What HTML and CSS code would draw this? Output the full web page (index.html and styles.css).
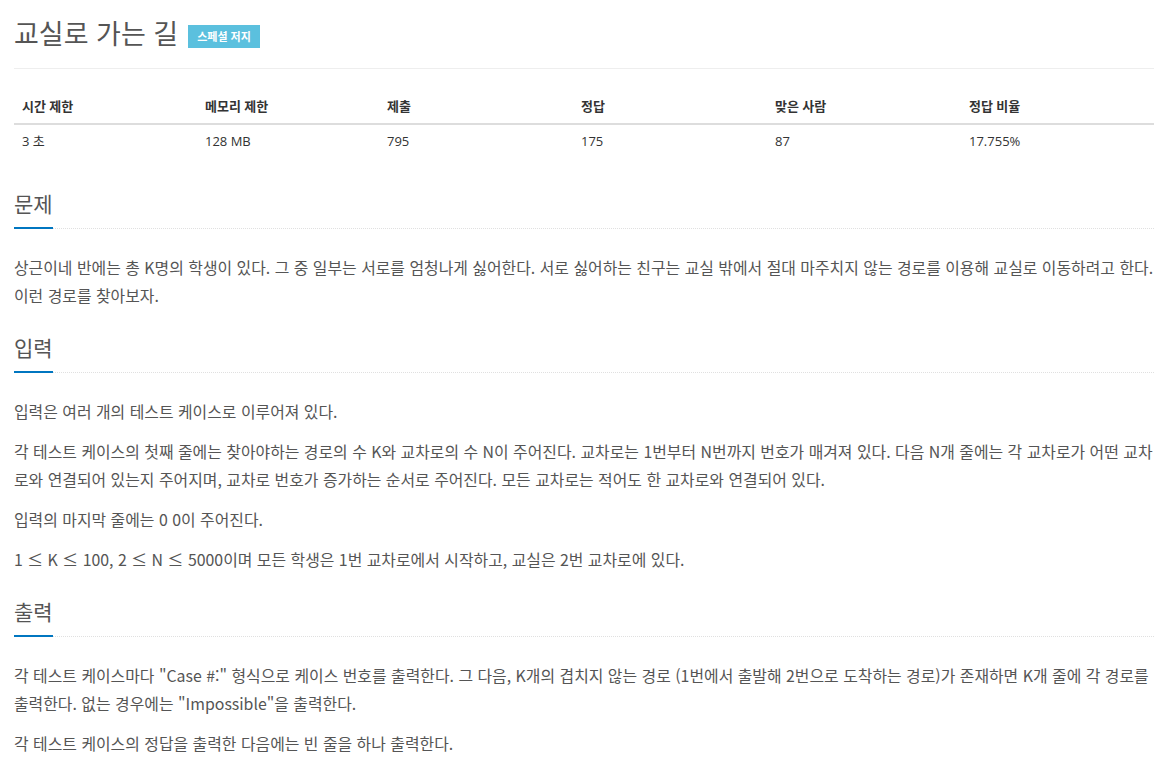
FILE: index.html
```html
<!DOCTYPE html>
<html lang="ko">
<head>
  <meta charset="UTF-8">
  <title>교실로 가는 길</title>
  <link rel="stylesheet" href="styles.css">
</head>
<body>
  <div class="container">
    <!-- 제목 -->
    <div class="page-header">
      <h1><span class="problem-title">교실로 가는 길</span><span class="label-info">스페셜 저지</span></h1>
    </div>

    <!-- 제한 정보 -->
    <table class="problem-info">
      <thead>
        <tr>
          <th class="col-time">시간 제한</th>
          <th class="col-mem">메모리 제한</th>
          <th class="col-num">제출</th>
          <th class="col-num">정답</th>
          <th class="col-num">맞은 사람</th>
          <th>정답 비율</th>
        </tr>
      </thead>
      <tbody>
        <tr>
          <td>3 초</td>
          <td>128 MB</td>
          <td>795</td>
          <td>175</td>
          <td>87</td>
          <td>17.755%</td>
        </tr>
      </tbody>
    </table>

    <!-- 문제 -->
    <section class="problem-section">
      <div class="headline"><h2>문제</h2></div>
      <div class="problem-text">
        <p>상근이네 반에는 총 K명의 학생이 있다. 그 중 일부는 서로를 엄청나게 싫어한다. 서로 싫어하는 친구는 교실 밖에서 절대 마주치지 않는 경로를 이용해 교실로 이동하려고 한다. 이런 경로를 찾아보자.</p>
      </div>
    </section>

    <!-- 입력 -->
    <section class="problem-section">
      <div class="headline"><h2>입력</h2></div>
      <div class="problem-text">
        <p>입력은 여러 개의 테스트 케이스로 이루어져 있다.</p>
        <p>각 테스트 케이스의 첫째 줄에는 찾아야하는 경로의 수 K와 교차로의 수 N이 주어진다. 교차로는 1번부터 N번까지 번호가 매겨져 있다. 다음 N개 줄에는 각 교차로가 어떤 교차로와 연결되어 있는지 주어지며, 교차로 번호가 증가하는 순서로 주어진다. 모든 교차로는 적어도 한 교차로와 연결되어 있다.</p>
        <p>입력의 마지막 줄에는 0 0이 주어진다.</p>
        <p>1 ≤ K ≤ 100, 2 ≤ N ≤ 5000이며 모든 학생은 1번 교차로에서 시작하고, 교실은 2번 교차로에 있다.</p>
      </div>
    </section>

    <!-- 출력 -->
    <section class="problem-section">
      <div class="headline"><h2>출력</h2></div>
      <div class="problem-text">
        <p>각 테스트 케이스마다 "Case #:" 형식으로 케이스 번호를 출력한다. 그 다음, K개의 겹치지 않는 경로 (1번에서 출발해 2번으로 도착하는 경로)가 존재하면 K개 줄에 각 경로를 출력한다. 없는 경우에는 "Impossible"을 출력한다.</p>
        <p>각 테스트 케이스의 정답을 출력한 다음에는 빈 줄을 하나 출력한다.</p>
      </div>
    </section>
  </div>
</body>
</html>
```

FILE: styles.css
```css
* {
  box-sizing: border-box;
}
body {
  margin: 0;
  background: #fff;
  color: #333;
  font-family: 'Open Sans', 'Noto Sans CJK KR', sans-serif;
  font-size: 13px;
  line-height: 1.42857;
}
.container {
  width: 1140px;
  margin-left: 14px;
}
/* 제목 */
.page-header {
  padding: 17px 0 20px;
  border-bottom: 1px solid #eee;
}
.page-header h1 {
  margin: 0;
  display: flex;
  align-items: center;
  font-weight: normal;
  line-height: 30px;
}
.problem-title {
  font-family: 'Noto Sans CJK KR', sans-serif;
  font-size: 27px;
  color: #555;
}
.label-info {
  display: inline-block;
  margin: 8px 0 0 10px;
  padding: 0 9px;
  height: 23px;
  line-height: 23px;
  background-color: #5bc0de;
  color: #fff;
  font-family: 'Noto Sans CJK KR', sans-serif;
  font-size: 11px;
  font-weight: bold;
}
/* 제한 정보 */
.problem-info {
  width: 100%;
  margin: 20px 0 32px;
  border-collapse: collapse;
  table-layout: fixed;
}
.problem-info th,
.problem-info td {
  padding: 8px;
  text-align: left;
  vertical-align: top;
}
.problem-info th {
  padding-bottom: 7px;
  font-weight: bold;
  border-bottom: 2px solid #ddd;
}
.problem-info td {
  padding-top: 7px;
  color: #333;
}
.col-time { width: 183px; }
.col-mem { width: 182px; }
.col-num { width: 194px; }
/* 본문 */
.problem-section {
  margin-bottom: 24px;
}
.headline {
  border-bottom: 1px dotted #e0e0e0;
  margin: 0 0 25px;
}
.headline h2 {
  display: inline-block;
  margin: 0 0 -1px;
  padding-bottom: 11px;
  border-bottom: 2px solid #0076c0;
  font-family: 'Noto Sans CJK KR', sans-serif;
  font-size: 21px;
  font-weight: normal;
  line-height: 26px;
  color: #555;
}
.problem-text {
  font-family: 'Noto Sans CJK KR', sans-serif;
  font-size: 15.9px;
  line-height: 28px;
  color: #555;
  word-break: break-all;
}
.problem-text p {
  margin: 0 0 12px;
}
```
